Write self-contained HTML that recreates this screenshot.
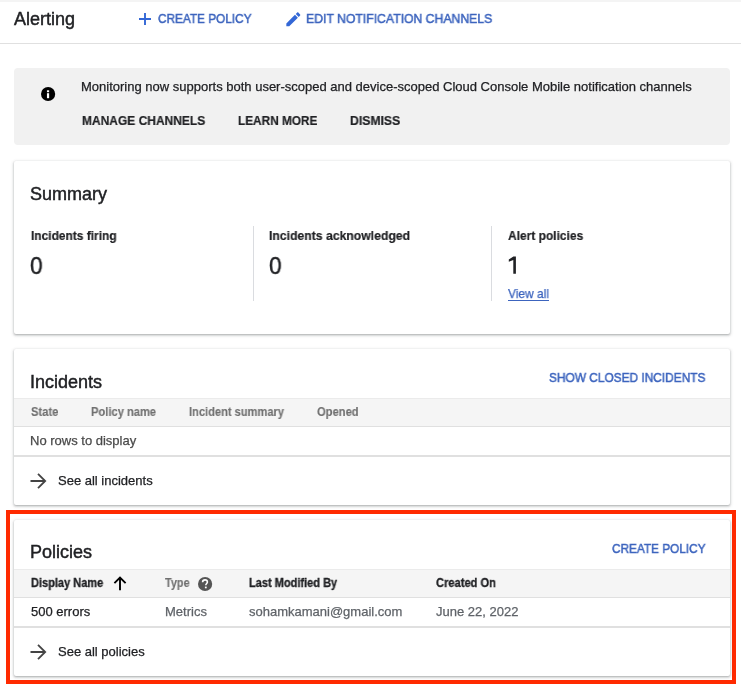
<!DOCTYPE html>
<html><head><meta charset="utf-8">
<style>
html,body{margin:0;padding:0;}
body{width:741px;height:697px;overflow:hidden;position:relative;background:#fff;font-family:"Liberation Sans",sans-serif;color:#202124;}
.a{position:absolute;white-space:nowrap;line-height:1;will-change:transform;transform-origin:0 0;}
.card{position:absolute;left:14px;width:716px;background:#fff;border-radius:2px;box-shadow:0 1px 2px 0 rgba(60,64,67,.3),0 1px 3px 1px rgba(60,64,67,.15);}
.band{position:absolute;left:14px;width:716px;background:#f5f5f5;border-top:1px solid #ebebeb;border-bottom:1px solid #e0e0e0;}
.hl{position:absolute;left:14px;width:716px;background:#e0e0e0;}
svg{position:absolute;}
</style></head><body>
<div style="position:absolute;left:0;top:0;width:741px;height:2px;background:#f4f4f4"></div>
<div style="position:absolute;left:0;top:43px;width:741px;height:1px;background:#e0e0e0"></div>
<div class="a" style="left:14px;top:10.36px;font-size:18px;color:#202124;-webkit-text-stroke:0.45px currentColor;">Alerting</div>
<svg style="left:139px;top:13px" width="12" height="12" viewBox="0 0 12 12"><path d="M5.05 0h1.9v5.05H12v1.9H6.95V12h-1.9V6.95H0v-1.9h5.05z" fill="#3367d6"/></svg>
<div class="a" style="left:158px;top:12.00px;font-size:13px;color:#3c64be;-webkit-text-stroke:0.5px currentColor;transform:scaleX(0.907);">CREATE POLICY</div>
<svg style="left:283.7px;top:9.7px" width="18.7" height="18.7" viewBox="0 0 24 24"><path fill="#3367d6" d="M3 17.25V21h3.75L17.81 9.94l-3.75-3.75L3 17.25zM20.71 7.04c.39-.39.39-1.02 0-1.41l-2.34-2.34c-.39-.39-1.02-.39-1.41 0l-1.83 1.83 3.75 3.75 1.83-1.83z"/></svg>
<div class="a" style="left:306px;top:12.00px;font-size:13px;color:#3c64be;-webkit-text-stroke:0.5px currentColor;transform:scaleX(0.94);">EDIT NOTIFICATION CHANNELS</div>
<div style="position:absolute;left:14px;top:68px;width:716px;height:77px;background:#f1f1f1;border-radius:4px"></div>
<svg style="left:40px;top:85.7px" width="16" height="16" viewBox="0 0 16 16"><circle cx="8.1" cy="8" r="7.1" fill="#000"/><rect x="6.95" y="4.3" width="2.2" height="1.9" fill="#fff"/><rect x="6.95" y="7.2" width="2.2" height="5" fill="#fff"/></svg>
<div class="a" style="left:80.6px;top:80.20px;font-size:13px;color:#202124;-webkit-text-stroke:0.25px currentColor;">Monitoring now supports both user-scoped and device-scoped Cloud Console Mobile notification channels</div>
<div class="a" style="left:81.5px;top:114.00px;font-size:13px;color:#202124;font-weight:bold;-webkit-text-stroke:0.2px currentColor;transform:scaleX(0.922);">MANAGE CHANNELS</div>
<div class="a" style="left:238px;top:114.00px;font-size:13px;color:#202124;font-weight:bold;-webkit-text-stroke:0.2px currentColor;transform:scaleX(0.908);">LEARN MORE</div>
<div class="a" style="left:349.5px;top:114.00px;font-size:13px;color:#202124;font-weight:bold;-webkit-text-stroke:0.2px currentColor;transform:scaleX(0.94);">DISMISS</div>
<div class="card" style="top:161px;height:173px"></div>
<div class="a" style="left:30.1px;top:184.96px;font-size:18px;color:#202124;-webkit-text-stroke:0.45px currentColor;">Summary</div>
<div class="a" style="left:30.5px;top:229.00px;font-size:13px;color:#202124;font-weight:bold;-webkit-text-stroke:0.2px currentColor;transform:scaleX(0.919);">Incidents firing</div>
<div class="a" style="left:269px;top:229.00px;font-size:13px;color:#202124;font-weight:bold;-webkit-text-stroke:0.2px currentColor;transform:scaleX(0.939);">Incidents acknowledged</div>
<div class="a" style="left:507.5px;top:229.00px;font-size:13px;color:#202124;font-weight:bold;-webkit-text-stroke:0.2px currentColor;transform:scaleX(0.921);">Alert policies</div>
<div class="a" style="left:30.2px;top:253.68px;font-size:24px;color:#202124;-webkit-text-stroke:0.45px currentColor;transform:scaleX(0.94);">0</div>
<div class="a" style="left:268.7px;top:253.68px;font-size:24px;color:#202124;-webkit-text-stroke:0.45px currentColor;transform:scaleX(0.94);">0</div>
<svg style="left:505px;top:253px" width="16" height="24" viewBox="0 0 16 24"><path d="M8.4 3.4H10.9V20.7H8.3V7.1L3.8 8.7V6.4z" fill="#202124"/></svg>
<div style="position:absolute;left:253px;top:226px;width:1px;height:75px;background:#dadce0"></div>
<div style="position:absolute;left:491px;top:226px;width:1px;height:75px;background:#dadce0"></div>
<div class="a" style="left:507.5px;top:287.00px;font-size:13px;color:#3c64be;-webkit-text-stroke:0.25px currentColor;transform:scaleX(0.92);">View all</div>
<div style="position:absolute;left:507.5px;top:300px;width:41.5px;height:1px;background:#3c64be"></div>
<div class="card" style="top:349px;height:156px"></div>
<div class="a" style="left:29.5px;top:372.76px;font-size:18px;color:#202124;-webkit-text-stroke:0.45px currentColor;">Incidents</div>
<div class="a" style="left:549px;top:371.00px;font-size:13px;color:#3c64be;-webkit-text-stroke:0.5px currentColor;transform:scaleX(0.914);">SHOW CLOSED INCIDENTS</div>
<div class="band" style="top:398px;height:27px"></div>
<div class="a" style="left:30.5px;top:406.09px;font-size:12px;color:#707070;font-weight:bold;-webkit-text-stroke:0.12px currentColor;transform:scaleX(0.931);">State</div>
<div class="a" style="left:90.7px;top:406.09px;font-size:12px;color:#707070;font-weight:bold;-webkit-text-stroke:0.12px currentColor;transform:scaleX(0.929);">Policy name</div>
<div class="a" style="left:188.7px;top:406.09px;font-size:12px;color:#707070;font-weight:bold;-webkit-text-stroke:0.12px currentColor;transform:scaleX(0.925);">Incident summary</div>
<div class="a" style="left:317px;top:406.09px;font-size:12px;color:#707070;font-weight:bold;-webkit-text-stroke:0.12px currentColor;transform:scaleX(0.932);">Opened</div>
<div class="a" style="left:29.5px;top:434.00px;font-size:13px;color:#4a4a4a;-webkit-text-stroke:0.25px currentColor;">No rows to display</div>
<div class="hl" style="top:455px;height:2px"></div>
<svg style="left:29px;top:472px" width="18" height="18" viewBox="0 0 18 18"><path d="M1.5 9H16.5M9 1.8L16.2 9L9 16.2" stroke="#444" stroke-width="1.8" fill="none"/></svg>
<div class="a" style="left:58.2px;top:474.00px;font-size:13px;color:#202124;-webkit-text-stroke:0.25px currentColor;">See all incidents</div>
<div style="position:absolute;left:6px;top:510px;width:722px;height:166px;border:4px solid #ff2a00"></div>
<div class="card" style="top:520px;height:156px"></div>
<div class="a" style="left:29.5px;top:543.46px;font-size:18px;color:#202124;-webkit-text-stroke:0.45px currentColor;">Policies</div>
<div class="a" style="left:611.5px;top:542.00px;font-size:13px;color:#3c64be;-webkit-text-stroke:0.5px currentColor;transform:scaleX(0.907);">CREATE POLICY</div>
<div class="band" style="top:569px;height:27px"></div>
<div class="a" style="left:30.5px;top:577.34px;font-size:12px;color:#202124;font-weight:bold;-webkit-text-stroke:0.3px currentColor;transform:scaleX(0.918);">Display Name</div>
<svg style="left:112px;top:575px" width="16" height="17" viewBox="0 0 16 17"><path d="M8 2.6V15.2M2.4 8.1L8 2.5L13.6 8.1" stroke="#000" stroke-width="1.9" fill="none"/></svg>
<div class="a" style="left:165px;top:577.34px;font-size:12px;color:#707070;font-weight:bold;-webkit-text-stroke:0.12px currentColor;transform:scaleX(0.907);">Type</div>
<svg style="left:197px;top:575.7px" width="16" height="16" viewBox="0 0 16 16"><circle cx="8.1" cy="8" r="7.1" fill="#555"/><path d="M5.6 6.2C5.6 4.8 6.7 3.9 8 3.9S10.4 4.8 10.4 6C10.4 7.4 8.8 7.6 8.8 9.2" stroke="#fff" stroke-width="1.6" fill="none"/><rect x="7.9" y="10.6" width="1.8" height="1.7" fill="#fff"/></svg>
<div class="a" style="left:249.4px;top:577.34px;font-size:12px;color:#202124;font-weight:bold;-webkit-text-stroke:0.3px currentColor;transform:scaleX(0.918);">Last Modified By</div>
<div class="a" style="left:436px;top:577.34px;font-size:12px;color:#202124;font-weight:bold;-webkit-text-stroke:0.3px currentColor;transform:scaleX(0.927);">Created On</div>
<div class="a" style="left:30.5px;top:605.00px;font-size:13px;color:#202124;-webkit-text-stroke:0.25px currentColor;">500 errors</div>
<div class="a" style="left:164.5px;top:605.00px;font-size:13px;color:#5f6368;-webkit-text-stroke:0.25px currentColor;">Metrics</div>
<div class="a" style="left:249.4px;top:605.00px;font-size:13px;color:#5f6368;-webkit-text-stroke:0.25px currentColor;">sohamkamani@gmail.com</div>
<div class="a" style="left:436px;top:605.00px;font-size:13px;color:#5f6368;-webkit-text-stroke:0.25px currentColor;">June 22, 2022</div>
<div class="hl" style="top:626px;height:2px"></div>
<svg style="left:29px;top:643px" width="18" height="18" viewBox="0 0 18 18"><path d="M1.5 9H16.5M9 1.8L16.2 9L9 16.2" stroke="#444" stroke-width="1.8" fill="none"/></svg>
<div class="a" style="left:58.2px;top:645.00px;font-size:13px;color:#202124;-webkit-text-stroke:0.25px currentColor;">See all policies</div>
</body></html>
